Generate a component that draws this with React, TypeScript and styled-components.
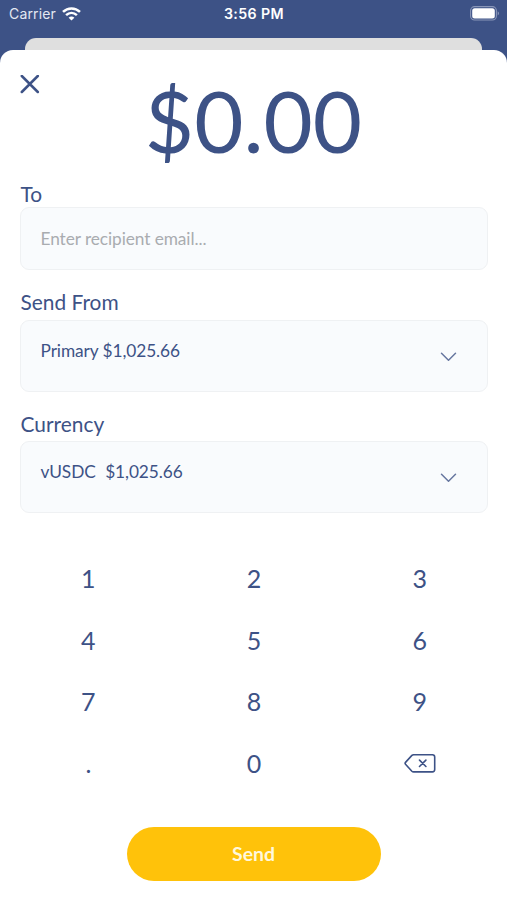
import React, { useState } from "react";
import styled, { createGlobalStyle } from "styled-components";

const navy = "#3d5286";

const GlobalStyle = createGlobalStyle`
  *, *::before, *::after { box-sizing: border-box; }
  body { margin: 0; background: ${navy}; font-family: Lato, sans-serif; color: ${navy}; }
  button, input { font: inherit; color: inherit; border: 0; background: none; padding: 0; margin: 0; }
  svg { display: block; }
`;

const Screen = styled.div`
  width: 507px;
  height: 900px;
  display: flex;
  flex-direction: column;
  overflow: hidden;
  background: ${navy};
`;

const StatusBar = styled.header`
  flex: none;
  height: 37.5px;
  padding: 0 7px 10px 9px;
  display: grid;
  grid-template-columns: 1fr auto 1fr;
  align-items: center;
  color: #fff;
  font-family: Inter, sans-serif;
  font-size: 14px;
  line-height: 20px;
`;

const Carrier = styled.div`
  display: flex;
  align-items: center;
  gap: 6px;
  color: #e4e8f2;
  letter-spacing: 0.15px;
`;

const Clock = styled.time`
  font-size: 14.2px;
  font-weight: 600;
  letter-spacing: 0.4px;
  margin-right: 1px;
`;

const BatterySlot = styled.div`
  justify-self: end;
`;

const BackCard = styled.div`
  flex: none;
  height: 12.5px;
  margin: 0 25px;
  border-radius: 11px 11px 0 0;
  background: #dfdfdf;
`;

const Sheet = styled.main`
  flex: 1;
  display: flex;
  flex-direction: column;
  border-radius: 13px 13px 0 0;
  background: #fff;
`;

const AmountRow = styled.div`
  height: 132px;
  padding: 25px 20px 0;
  display: grid;
  grid-template-columns: 20px 1fr 20px;
`;

const CloseButton = styled.button`
  height: 20px;
  width: 20px;
`;

const Amount = styled.h1`
  margin: -7px 0 0;
  font-size: 85px;
  font-weight: 400;
  line-height: 104px;
  text-align: center;
  white-space: nowrap;
`;

const Form = styled.form`
  padding: 0 19.5px 0 20px;
`;

const Label = styled.label<{ $height: number; $line: number }>`
  display: block;
  height: ${(p) => p.$height}px;
  line-height: ${(p) => p.$line}px;
  padding-left: 0.5px;
  font-size: 20.9px;
`;

const box = `
  width: 100%;
  border: 1px solid #eff1f3;
  border-radius: 9px;
  background: #f9fbfd;
  font-size: 17.3px;
  letter-spacing: -0.08px;
`;

const EmailInput = styled.input`
  && {
    ${box}
    display: block;
    height: 63px;
    padding: 0 19.5px;
    outline: none;
  }
  &::placeholder { color: #a9acb0; opacity: 1; }
`;

const SelectBox = styled.button`
  && {
    ${box}
    height: 72px;
    padding: 0 29.5px 0 19.5px;
  }
  display: flex;
  align-items: center;
  justify-content: space-between;
  text-align: left;
`;

const SelectText = styled.span`
  display: flex;
  gap: 9.5px;
  padding-bottom: 11px;
  line-height: 22px;
`;

const Chevron = styled.svg`
  margin-top: 1px;
`;

const Keypad = styled.div`
  margin-top: 34px;
  padding: 0 4.5px 0 5.5px;
  display: grid;
  grid-template-columns: repeat(3, 1fr);
  grid-auto-rows: 61.75px;
`;

const Key = styled.button`
  && { font-size: 25px; }
  display: flex;
  align-items: center;
  justify-content: center;
`;

const SendButton = styled.button`
  && {
    width: 254px;
    height: 53.5px;
    margin: 33px auto 0;
    padding-bottom: 1px;
    border-radius: 27px;
    background: #ffc20a;
    color: #fff8dd;
    font-size: 19.4px;
    font-weight: 700;
  }
`;

const WifiIcon = () => (
  <svg width="19" height="14" viewBox="0 0 19 14" fill="none" stroke="#fff" strokeWidth="2.6">
    <path d="M1 4.9C5.9.3 13.1.3 18 4.9" />
    <path d="M4.1 8.1c3.2-2.9 7.6-2.9 10.8 0" />
    <path d="M9.5 13.6 6.6 10.7c1.7-1.5 4.1-1.5 5.8 0Z" fill="#fff" stroke="none" />
  </svg>
);

const BatteryIcon = () => (
  <svg width="30" height="15" viewBox="0 0 30 15" fill="none">
    <rect x="0.6" y="0.6" width="25.8" height="13.4" rx="4" stroke="#8996b8" strokeWidth="1.1" />
    <rect x="2.2" y="2.2" width="22.6" height="10.2" rx="2.5" fill="#fff" />
    <path d="M27.7 5.2c1.8.8 1.8 3.4 0 4.2Z" fill="#8996b8" />
  </svg>
);

const CloseIcon = () => (
  <svg width="20" height="20" viewBox="0 0 20 20" stroke={navy} strokeWidth="2.5" strokeLinecap="round">
    <path d="m1.8 1 16 16M17.8 1l-16 16" />
  </svg>
);

const ChevronIcon = () => (
  <Chevron width="17" height="10" viewBox="0 0 17 10" fill="none" stroke="#66769f" strokeWidth="1.5" strokeLinecap="round" strokeLinejoin="round">
    <path d="m1.5 1.2 7 7 7-7" />
  </Chevron>
);

const BackspaceIcon = () => (
  <svg width="32" height="20" viewBox="0 0 32 20" fill="none" stroke={navy} strokeWidth="1.6" strokeLinecap="round" strokeLinejoin="round">
    <path d="M9.6 1.7h18.8a2.3 2.3 0 0 1 2.3 2.3v12.6a2.3 2.3 0 0 1-2.3 2.3H9.6q-1 0-1.7-.7L1.5 11.2q-.8-.9 0-1.8L7.9 2.4q.7-.7 1.7-.7Z" />
    <path d="m15.5 7.1 6.4 6.4M21.9 7.1l-6.4 6.4" />
  </svg>
);

const keys = ["1", "2", "3", "4", "5", "6", "7", "8", "9", ".", "0"];

export default function App() {
  const [email, setEmail] = useState("");
  return (
    <Screen>
      <GlobalStyle />
      <StatusBar>
        <Carrier>Carrier <WifiIcon /></Carrier>
        <Clock>3:56 PM</Clock>
        <BatterySlot><BatteryIcon /></BatterySlot>
      </StatusBar>
      <BackCard />
      <Sheet>
        <AmountRow>
          <CloseButton aria-label="Close"><CloseIcon /></CloseButton>
          <Amount>$0.00</Amount>
        </AmountRow>
        <Form onSubmit={(e) => e.preventDefault()}>
          <Label $height={25} $line={24} htmlFor="to">To</Label>
          <EmailInput id="to" value={email} onChange={(e) => setEmail(e.target.value)} placeholder="Enter recipient email..." />
          <Label $height={50} $line={64} as="div">Send From</Label>
          <SelectBox type="button">
            <SelectText>Primary $1,025.66</SelectText>
            <ChevronIcon />
          </SelectBox>
          <Label $height={49} $line={64} as="div">Currency</Label>
          <SelectBox type="button">
            <SelectText><span>vUSDC</span><span>$1,025.66</span></SelectText>
            <ChevronIcon />
          </SelectBox>
        </Form>
        <Keypad>
          {keys.map((k) => <Key key={k}>{k}</Key>)}
          <Key aria-label="Delete"><BackspaceIcon /></Key>
        </Keypad>
        <SendButton>Send</SendButton>
      </Sheet>
    </Screen>
  );
}
